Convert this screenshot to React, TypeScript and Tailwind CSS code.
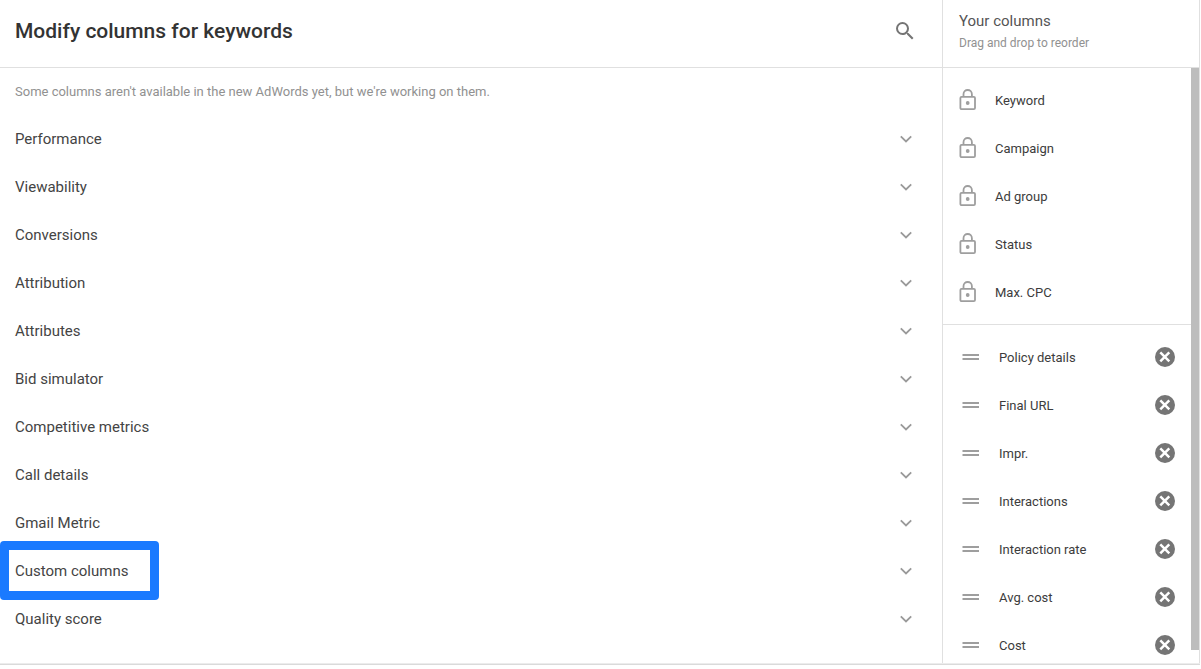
const categories = [
  "Performance",
  "Viewability",
  "Conversions",
  "Attribution",
  "Attributes",
  "Bid simulator",
  "Competitive metrics",
  "Call details",
  "Gmail Metric",
  "Custom columns",
  "Quality score",
];

const highlightedCategory = "Custom columns";

const lockedColumns = ["Keyword", "Campaign", "Ad group", "Status", "Max. CPC"];

const movableColumns = [
  "Policy details",
  "Final URL",
  "Impr.",
  "Interactions",
  "Interaction rate",
  "Avg. cost",
  "Cost",
];

function SearchIcon() {
  return (
    <svg viewBox="0 0 24 24" className="size-6 fill-[#757575]">
      <path d="M15.5 14h-.79l-.28-.27A6.471 6.471 0 0 0 16 9.5 6.5 6.5 0 1 0 9.5 16c1.61 0 3.09-.59 4.23-1.57l.27.28v.79l5 4.99L20.49 19l-4.99-5zm-6 0C7.01 14 5 11.99 5 9.5S7.01 5 9.5 5 14 7.01 14 9.5 11.99 14 9.5 14z" />
    </svg>
  );
}

function ChevronIcon() {
  return (
    <svg viewBox="0 0 18 18" className="size-[18px] fill-none stroke-[#9a9a9a]">
      <path d="M3.8 6.3L9 11.5l5.2-5.2" strokeWidth="1.8" />
    </svg>
  );
}

function LockIcon() {
  return (
    <svg viewBox="0 0 24 24" className="size-6 fill-none stroke-[#9e9e9e]">
      <rect x="4.4" y="8.9" width="14.6" height="12.2" rx="1.2" strokeWidth="1.8" />
      <path d="M7.5 8.5V6.2a4.2 4.2 0 0 1 8.4 0v2.3" strokeWidth="1.8" />
      <circle cx="11.7" cy="15" r="1.9" className="fill-[#9e9e9e] stroke-none" />
    </svg>
  );
}

function DragIcon() {
  return (
    <svg viewBox="0 0 24 24" className="size-6 fill-[#9e9e9e]">
      <path d="M3.5 9h16.5v2H3.5zM3.5 13h16.5v2H3.5z" />
    </svg>
  );
}

function RemoveIcon() {
  return (
    <svg viewBox="0 0 24 24" className="size-6">
      <circle cx="12" cy="12" r="10" className="fill-[#757575]" />
      <path d="M7.3 7.3l9 9M16.3 7.3l-9 9" className="stroke-white" strokeWidth="2.5" />
    </svg>
  );
}

function CategoryRow({ name }: { name: string }) {
  return (
    <li className="relative">
      <button
        type="button"
        className="flex h-12 w-full items-center justify-between pr-[27px] pl-[15px] text-[15px] text-[#444444]"
      >
        {name}
        <ChevronIcon />
      </button>
      {name === highlightedCategory && (
        <div className="pointer-events-none absolute -top-1.5 left-0 h-[59px] w-[159px] rounded-[4px] border-[9px] border-[#1a7aff]" />
      )}
    </li>
  );
}

export default function App() {
  return (
    <div className="flex h-screen flex-col bg-white pr-px font-['Roboto',sans-serif]">
      <div className="flex min-h-0 flex-1 border-r border-[#e0e0e0]">
        <main className="flex min-w-0 flex-1 flex-col">
          <header className="flex h-17 shrink-0 items-center justify-between border-b border-[#e0e0e0] pr-[25px] pb-1.5 pl-[15px]">
            <h1 className="pt-0.5 text-[21px] font-medium text-[#333333]">
              Modify columns for keywords
            </h1>
            <button type="button" aria-label="Search">
              <SearchIcon />
            </button>
          </header>
          <p className="pt-[14px] pb-[13px] pl-[15px] text-[13px] leading-5 text-[#919191]">
            Some columns aren't available in the new AdWords yet, but we're working on them.
          </p>
          <ul>
            {categories.map((name) => (
              <CategoryRow key={name} name={name} />
            ))}
          </ul>
        </main>

        <aside className="flex w-[257px] shrink-0 flex-col border-l border-[#e0e0e0]">
          <header className="h-17 shrink-0 border-b border-[#e0e0e0] pt-[11px] pl-4">
            <h2 className="text-[15px] leading-5 text-[#555555]">Your columns</h2>
            <p className="pt-0.5 text-xs leading-5 text-[#919191]">Drag and drop to reorder</p>
          </header>
          <div className="flex min-h-0 flex-1">
            <div className="min-w-0 flex-1 overflow-hidden text-[13px] text-[#3c3c3c]">
              <ul className="border-b border-[#e0e0e0] py-2">
                {lockedColumns.map((name) => (
                  <li key={name} className="flex h-12 items-center pl-[13px]">
                    <LockIcon />
                    <span className="pt-0.5 pl-[15px]">{name}</span>
                  </li>
                ))}
              </ul>
              <ul className="pt-2">
                {movableColumns.map((name) => (
                  <li key={name} className="flex h-12 items-center pr-[14px] pl-4">
                    <DragIcon />
                    <span className="flex-1 pt-0.5 pl-4">{name}</span>
                    <button type="button" aria-label={`Remove ${name}`}>
                      <RemoveIcon />
                    </button>
                  </li>
                ))}
              </ul>
            </div>
            <div className="w-2 pb-[13px]">
              <div className="h-full bg-[#bdbdbd]" />
            </div>
          </div>
        </aside>
      </div>
      <div className="h-[6px] shrink-0 border-t border-[#ececec]">
        <div className="h-px bg-[#dadada]" />
      </div>
    </div>
  );
}
